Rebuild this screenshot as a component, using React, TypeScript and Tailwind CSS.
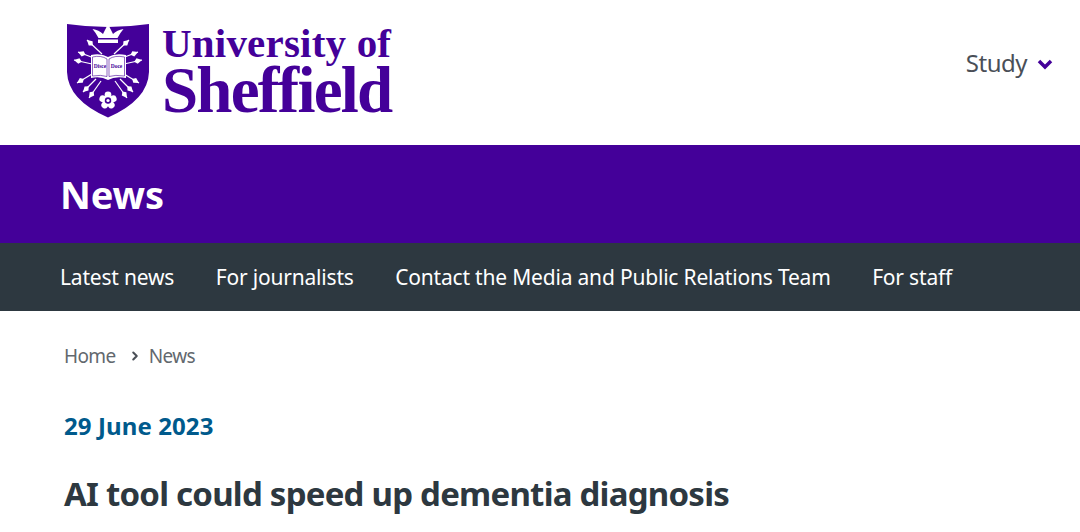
import { ChevronRight } from 'lucide-react';

const navItems = ['Latest news', 'For journalists', 'Contact the Media and Public Relations Team', 'For staff'];

// one arrow of the crest: tail near the book, head pointing outward
function Arrow({ x1, y1, x2, y2 }: { x1: number; y1: number; x2: number; y2: number }) {
  const a = Math.atan2(y2 - y1, x2 - x1);
  const p = (d: number, s: number) =>
    `${x2 - Math.cos(a) * d - Math.sin(a) * s},${y2 - Math.sin(a) * d + Math.cos(a) * s}`;
  return (
    <g>
      <line x1={x1} y1={y1} x2={x2} y2={y2} stroke="#fff" strokeWidth="1.2" />
      <polygon points={`${x2},${y2} ${p(5, 2.8)} ${p(8, 0)} ${p(5, -2.8)}`} fill="#fff" />
    </g>
  );
}

function Crest() {
  const arrows = [
    [102, 54, 87, 40],
    [94, 58, 78, 52],
    [92, 64, 74, 60],
  ];
  const lower = [
    [92, 74, 77, 83],
    [96, 79, 83, 92],
    [101, 81, 89, 98],
  ];
  return (
    <svg viewBox="67 21 83 97" className="w-[83px] h-[97px] shrink-0">
      <path d="M67 24 Q108 30 149 24 L149 72 Q148 100 108 117.5 Q68 100 67 72 Z" fill="#440099" />
      {/* crown */}
      <path d="M98.500 38 Q96 33 92.500 29 Q99 30 103 34 L105 30 L108 24 L111 30 L113 34 Q117 30 123.500 29 Q120 33 117.500 38 Z" fill="#fff" />
      <rect x="98" y="39.500" width="20" height="3.500" fill="#fff" />
      {[...arrows, ...lower].map(([x1, y1, x2, y2], i) => (
        <g key={i}>
          <Arrow x1={x1} y1={y1} x2={x2} y2={y2} />
          <Arrow x1={216 - x1} y1={y1} x2={216 - x2} y2={y2} />
        </g>
      ))}
      {/* book */}
      <path d="M91 55 Q101 53 108 57 Q115 53 126 55 V78 Q115 76 108 80 Q101 76 91 78 Z" fill="#fff" />
      <path d="M92.500 57 Q101 55 107 59 V76.500 Q101 74.500 92.500 76 Z M109 59 Q115 55 124.500 57 V76 Q115 74.500 109 76.500 Z" fill="#fff" stroke="#440099" strokeWidth="0.6" />
      <text x="100" y="68" textAnchor="middle" fontSize="5.500" fontWeight="700" fill="#440099" fontFamily="Liberation Serif, serif">Disce</text>
      <text x="116.500" y="68" textAnchor="middle" fontSize="5.500" fontWeight="700" fill="#440099" fontFamily="Liberation Serif, serif">Doce</text>
      {/* rose */}
      {[0, 72, 144, 216, 288].map((r) => (
        <circle key={r} cx="108" cy="95" r="3.400" fill="#fff" transform={`rotate(${r} 108 100.500)`} />
      ))}
      <circle cx="108" cy="100.500" r="3.200" fill="#440099" />
      <circle cx="108" cy="100.500" r="1.600" fill="#fff" />
    </svg>
  );
}

export default function App() {
  return (
    <div className="w-[1080px] h-[532px] overflow-hidden bg-white font-['Noto_Sans',sans-serif]">
      <header className="h-[145px] flex items-start justify-between pl-[67px] pr-[27px]">
        <div className="flex items-start gap-[12px] pt-[21px]">
          <Crest />
          <div className="font-['Liberation_Serif',serif] font-bold text-[#440099]">
            <div className="text-[41px] leading-[44px] tracking-[0.2px]">University of</div>
            <div className="text-[65px] leading-[50px] tracking-[-1.8px]">Sheffield</div>
          </div>
        </div>
        <div className="flex items-center gap-[10px] pt-[47px] text-[24px] leading-[32px] text-[#4a4f57]">
          <span className="tracking-[-0.5px]">Study</span>
          <svg viewBox="0 0 16 12" className="w-[16px] h-[12px] mt-[2px]">
            <path d="M2 3 L8 9 L14 3" fill="none" stroke="#440099" strokeWidth="3.500" />
          </svg>
        </div>
      </header>

      <div className="h-[98px] bg-[#440099] flex items-center pl-[60px]">
        <div className="text-[38px] font-bold text-white tracking-[-0.1px]">News</div>
      </div>

      <nav className="h-[68px] bg-[#2d3840] flex items-center gap-[41.5px] pl-[60px] text-[21px] text-white tracking-[-0.19px]">
        {navItems.map((item) => (
          <span key={item} className="mt-[2px]">{item}</span>
        ))}
      </nav>

      <main className="pl-[64px]">
        <div className="flex items-center pt-[32px] text-[19px] leading-[26px] text-[#62686e] tracking-[-0.6px]">
          <span>Home</span>
          <ChevronRight className="w-[14px] h-[14px] ml-[12px] mr-[7px] text-[#4a4f57]" strokeWidth={3.5} />
          <span>News</span>
        </div>
        <div className="pt-[42px] text-[24px] leading-[30px] font-bold text-[#005a8c] tracking-[0.1px]">29 June 2023</div>
        <h1 className="pt-[31px] text-[33px] leading-[44px] font-bold text-[#2d3840] tracking-[-0.77px]">
          AI tool could speed up dementia diagnosis
        </h1>
      </main>
    </div>
  );
}
